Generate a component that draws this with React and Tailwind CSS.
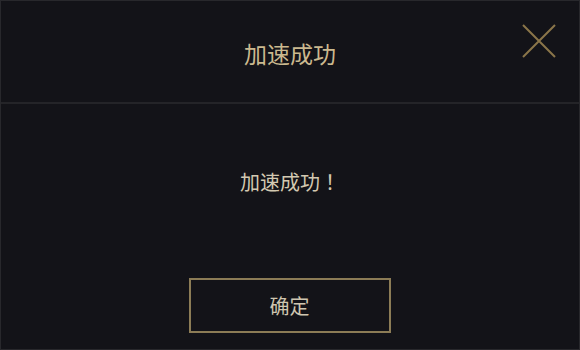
export default function App() {
  return (
    <div
      className="w-[580px] h-[350px] bg-[#131318] border border-[#28282c] flex flex-col box-border"
      style={{ fontFamily: '"Noto Sans CJK SC", "Noto Sans", sans-serif' }}
    >
      <div className="relative h-[103px] flex items-center justify-center border-b-2 border-[#242428] shrink-0">
        <span className="text-[23px] text-[#cbb98f] leading-none mt-[4px]">加速成功</span>
        <button className="absolute right-[22px] top-[22px] w-[36px] h-[36px] p-0 bg-transparent">
          <svg width="36" height="36" viewBox="0 0 36 36">
            <path d="M2 2 L34 34 M34 2 L2 34" stroke="#8a7549" strokeWidth="2" fill="none" />
          </svg>
        </button>
      </div>
      <div className="flex flex-col items-center">
        <div className="mt-[68px] text-[20px] leading-none text-[#d3c9b1]">
          加速成功<span style={{ fontFamily: '"Noto Sans CJK JP", sans-serif' }}>！</span>
        </div>
        <button className="mt-[86px] ml-[-1px] w-[202px] h-[55px] border-2 border-[#8c7c56] bg-transparent text-[20px] text-[#cfc6b0] flex items-center justify-center">
          确定
        </button>
      </div>
    </div>
  );
}
